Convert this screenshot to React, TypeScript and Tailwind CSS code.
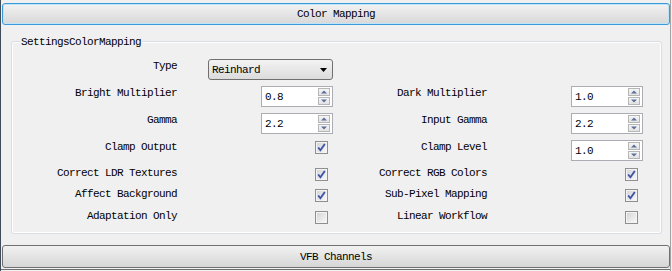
const FONT = "font-['Liberation_Mono',monospace] text-[11px] tracking-[-0.6px] leading-[12px] text-black";

function Check({ checked }: { checked: boolean }) {
	return (
		<svg width="13" height="13" viewBox="0 0 13 13" className="block">
			<defs>
				<linearGradient id="cbg" x1="0" y1="0" x2="1" y2="1">
					<stop offset="0" stopColor="#d6d6d6" />
					<stop offset="1" stopColor="#f7f7f7" />
				</linearGradient>
			</defs>
			<rect x="0.5" y="0.5" width="12" height="12" fill="#f4f4f4" stroke="#8f8f8f" />
			<rect x="2" y="2" width="9" height="9" fill="url(#cbg)" />
			{checked && (
				<>
					<path d="M3.2 6.6 L5.4 9.4 L9.8 3" fill="none" stroke="#c3cde8" strokeWidth="2.6" />
					<path d="M3.2 6.6 L5.4 9.2 L9.8 3" fill="none" stroke="#3b4fa0" strokeWidth="1.6" />
				</>
			)}
		</svg>
	);
}

function Spin({ value }: { value: string }) {
	return (
		<div className="w-[72px] h-[21px] border border-[#abadb3] bg-white flex items-center justify-between pl-[3px] pr-[2px]">
			<span className="pt-[1px]">{value}</span>
			<div className="flex flex-col gap-[1px]">
				{[0, 1].map((i) => (
					<div
						key={i}
						className="w-[12px] h-[8px] border border-[#b6b6b6] bg-gradient-to-b from-[#f6f6f6] to-[#e2e2e2] flex items-center justify-center"
					>
						<svg width="6" height="4" viewBox="0 0 6 4">
							<path d={i === 0 ? "M0 3.5 L3 0.5 L6 3.5 Z" : "M0 0.5 L3 3.5 L6 0.5 Z"} fill="#5b6f9c" />
						</svg>
					</div>
				))}
			</div>
		</div>
	);
}

function Combo({ value }: { value: string }) {
	return (
		<div className="w-[125px] h-[21px] border border-[#707070] rounded-[3px] bg-gradient-to-b from-[#f3f3f3] to-[#dcdcdc] flex items-center justify-between pl-[3px] pr-[5px]">
			<span className="pt-[1px]">{value}</span>
			<svg width="7" height="4" viewBox="0 0 7 4">
				<path d="M0 0 L7 0 L3.5 4 Z" fill="#000" />
			</svg>
		</div>
	);
}

type Cell = { label: string; kind: "spin" | "check" | "combo"; value?: string; checked?: boolean };

function Widget({ cell }: { cell: Cell }) {
	if (cell.kind === "spin") return <Spin value={cell.value ?? ""} />;
	if (cell.kind === "combo") return <Combo value={cell.value ?? ""} />;
	return (
		<div className="mr-[5px]">
			<Check checked={!!cell.checked} />
		</div>
	);
}

function Row({
	left,
	right,
	mt,
	labelTop,
	checkTop,
}: {
	left: Cell;
	right?: Cell;
	mt: string;
	labelTop: string;
	checkTop: string;
}) {
	return (
		<div className={`flex items-start h-[21px] ${mt}`}>
			<div className={`w-[165px] text-right ${labelTop}`}>{left.label}</div>
			<div className={`w-[125px] ml-[31px] flex justify-end ${left.kind === "check" ? checkTop : ""}`}>
				<Widget cell={left} />
			</div>
			{right && (
				<>
					<div className={`w-[154px] text-right ${labelTop}`}>{right.label}</div>
					<div className={`w-[125px] ml-[31px] flex justify-end ${right.kind === "check" ? checkTop : ""}`}>
						<Widget cell={right} />
					</div>
				</>
			)}
		</div>
	);
}

export default function App() {
	return (
		<div className={`w-[672px] h-[271px] bg-[#f0f0f0] overflow-hidden ${FONT}`}>
			<div className="w-[671px] h-[271px] border-l border-r border-l-[#3f4b59] border-r-[#a3a3a3] flex flex-col">
				{/* Color Mapping header */}
				<div className="mt-[3px] ml-[1px] w-[668px] h-[22px] shrink-0 rounded-[3px] border border-[#3a9ad9] shadow-[inset_0_0_0_1px_#bfe3f7] bg-gradient-to-b from-[#f2f2f2] to-[#d8d8d8] flex items-center justify-center">
					<span>Color Mapping</span>
				</div>

				{/* group box */}
				<div className="relative mt-[16px] ml-[10px] w-[651px] h-[193px] shrink-0 rounded-[3px] border border-[#d5dfe5] shadow-[inset_0_0_0_1px_#ffffff] pt-[17px]">
					<span className="absolute left-[8px] top-[-6px] px-[1px] bg-[#f0f0f0]">SettingsColorMapping</span>

					<Row mt="" labelTop="mt-[1px]" checkTop="" left={{ label: "Type", kind: "combo", value: "Reinhard" }} />
					<Row
						mt="mt-[6px]"
						labelTop="mt-[1px]"
						checkTop=""
						left={{ label: "Bright Multiplier", kind: "spin", value: "0.8" }}
						right={{ label: "Dark Multiplier", kind: "spin", value: "1.0" }}
					/>
					<Row
						mt="mt-[6px]"
						labelTop="mt-[1px]"
						checkTop=""
						left={{ label: "Gamma", kind: "spin", value: "2.2" }}
						right={{ label: "Input Gamma", kind: "spin", value: "2.2" }}
					/>
					<Row
						mt="mt-[6px]"
						labelTop="mt-[1px]"
						checkTop="mt-[1px]"
						left={{ label: "Clamp Output", kind: "check", checked: true }}
						right={{ label: "Clamp Level", kind: "spin", value: "1.0" }}
					/>
					<Row
						mt="mt-[2px]"
						labelTop="mt-[4px]"
						checkTop="mt-[5px]"
						left={{ label: "Correct LDR Textures", kind: "check", checked: true }}
						right={{ label: "Correct RGB Colors", kind: "check", checked: true }}
					/>
					<Row
						mt=""
						labelTop="mt-[4px]"
						checkTop="mt-[5px]"
						left={{ label: "Affect Background", kind: "check", checked: true }}
						right={{ label: "Sub-Pixel Mapping", kind: "check", checked: true }}
					/>
					<Row
						mt="mt-[1px]"
						labelTop="mt-[4px]"
						checkTop="mt-[5px]"
						left={{ label: "Adaptation Only", kind: "check", checked: false }}
						right={{ label: "Linear Workflow", kind: "check", checked: false }}
					/>
				</div>

				{/* VFB Channels header */}
				<div className="mt-[11px] ml-[1px] w-[668px] h-[23px] shrink-0 rounded-[3px] border border-[#707070] bg-gradient-to-b from-[#f2f2f2] to-[#d6d6d6] flex items-center justify-center">
					<span>VFB Channels</span>
				</div>
				<div className="mt-[1px] h-[1px] w-full bg-[#6f6f6f] shrink-0" />
			</div>
		</div>
	);
}
